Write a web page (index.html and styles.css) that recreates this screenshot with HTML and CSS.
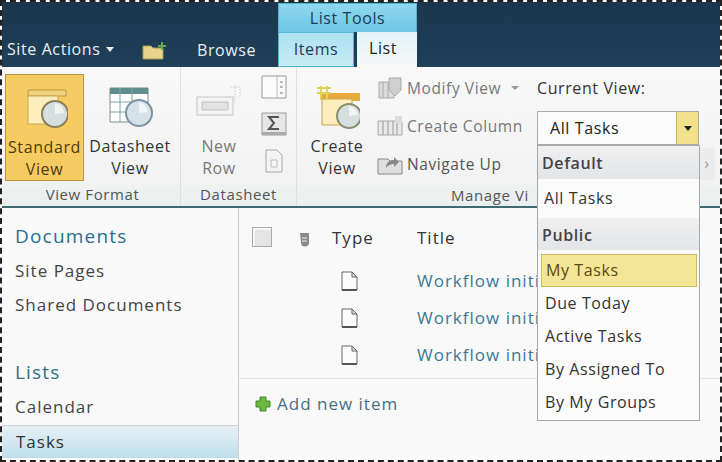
FILE: index.html
```html
<!DOCTYPE html>
<html lang="en">
<head>
<meta charset="UTF-8">
<title>Tasks</title>
<link rel="stylesheet" href="styles.css">
</head>
<body>

<div class="page">
  <div class="topbar">
    <div class="site-actions">Site Actions <span class="caret-white"></span></div>
    <svg class="nav-icon" width="24" height="20" viewBox="0 0 24 20">
      <path d="M1 5h8l2 2h10v11H1z" fill="#e8d48a" stroke="#a8985a"/>
      <path d="M16 4h3V1h2v3h3v2h-3v3h-2V6h-3z" fill="#5fb04a"/>
    </svg>
    <div class="browse">Browse</div>
    <div class="tool-tabs">
      <div class="tool-title">List Tools</div>
      <div class="tool-row">
        <div class="tab-items">Items</div>
        <div class="tab-list">List</div>
      </div>
    </div>
  </div>

  <div class="ribbon">
    <div class="group group-format">
      <div class="group-body">
        <div class="big-btn big-active">
          <svg width="46" height="44" viewBox="0 0 46 44">
            <path d="M6 4h38v6H6z" fill="#f3d27e" stroke="#b89545"/>
            <path d="M6 10h30v28H6z" fill="#fdeebc" stroke="#c9a654"/>
            <circle cx="33" cy="28" r="13" fill="#d5dfe0" stroke="#8b7f58" stroke-width="2"/>
            <path d="M33 17a11 11 0 0 1 9 10l-9 1z" fill="#f2f4f2"/>
          </svg>
          <span>Standard<br>View</span>
        </div>
        <div class="big-btn">
          <svg width="46" height="44" viewBox="0 0 46 44">
            <path d="M3 3h38v34H3z" fill="#fff" stroke="#76908f"/>
            <path d="M3 3h38v6H3z" fill="#5f8f8c"/>
            <path d="M3 17h38M3 27h38M13 3v34M25 3v34" stroke="#7fa5a2"/>
            <circle cx="32" cy="28" r="13" fill="#d6e2ea" stroke="#7e93a3" stroke-width="2"/>
            <path d="M32 17a11 11 0 0 1 9 10l-9 1z" fill="#f2f6f8"/>
          </svg>
          <span>Datasheet<br>View</span>
        </div>
      </div>
      <div class="group-label">View Format</div>
    </div>

    <div class="group group-data">
      <div class="group-body">
        <div class="big-btn btn-new muted">
          <svg width="46" height="44" viewBox="0 0 46 44">
            <path d="M1 12h36v18H1z" fill="#f4f4f4" stroke="#c4c4c4"/>
            <path d="M6 17h26v8H6z" fill="#e2e2e2" stroke="#c0c0c0"/>
            <path d="M34 2h10v10M39 2v16" fill="none" stroke="#d4d4d4" stroke-dasharray="2 1"/>
          </svg>
          <span>New<br>Row</span>
        </div>
        <div class="small-icons">
          <svg width="26" height="26" viewBox="0 0 26 26">
            <path d="M1 2h24v22H1z" fill="#fbfbfb" stroke="#9a9a9a"/>
            <path d="M16 2v22" stroke="#bbb"/>
            <path d="M19 8h3M19 13h3M19 19h3" stroke="#777"/>
          </svg>
          <svg width="26" height="26" viewBox="0 0 26 26">
            <path d="M1 2h24v22H1z" fill="#e6e6e6" stroke="#999"/>
            <path d="M1 21h24v3H1z" fill="#aaa"/>
            <path d="M18 6H8l5 6-5 6h10" fill="none" stroke="#555" stroke-width="2"/>
          </svg>
          <svg width="26" height="26" viewBox="0 0 26 26">
            <path d="M5 2h11l5 5v17H5z" fill="#f4f4f4" stroke="#aaa"/>
            <path d="M10 12h6v7h-6z" fill="none" stroke="#bbb"/>
          </svg>
        </div>
      </div>
      <div class="group-label">Datasheet</div>
    </div>

    <div class="group group-manage">
      <div class="group-body">
        <div class="big-btn btn-create">
          <svg width="46" height="44" viewBox="0 0 46 44">
            <path d="M8 8h38v8H8z" fill="#e8a93c"/>
            <path d="M8 14h30v26H8z" fill="#fdeebc" stroke="#c9a654"/>
            <path d="M3 8h14M3 3h14M7 1v14M13 1v14" stroke="#dcd45a" stroke-width="2"/>
            <circle cx="35" cy="31" r="12" fill="#d5dfe0" stroke="#8b8b70" stroke-width="2"/>
            <path d="M35 21a10 10 0 0 1 9 9l-9 1z" fill="#f2f4f2"/>
          </svg>
          <span>Create<br>View</span>
        </div>
        <div class="cmd-list">
          <div class="cmd muted">
            <svg width="26" height="24" viewBox="0 0 26 24">
              <path d="M2 6h15v16H2z" fill="#dcdcdc" stroke="#aaa"/>
              <path d="M6 6v16M11 6v16" stroke="#aaa"/>
              <path d="M12 2h12v12l-6 6-6-6z" fill="#cfcfcf" stroke="#aaa"/>
            </svg>
            <span>Modify View</span><span class="caret-gray"></span>
          </div>
          <div class="cmd muted">
            <svg width="26" height="24" viewBox="0 0 26 24">
              <path d="M1 7h24v14H1z" fill="#e8e8e8" stroke="#aaa"/>
              <path d="M6 7v14M11 7v14M16 7v14M20 7v14" stroke="#999"/>
              <path d="M18 2h7v7h-7z" fill="#ddd"/>
            </svg>
            <span>Create Column</span>
          </div>
          <div class="cmd cmd-dark">
            <svg width="26" height="24" viewBox="0 0 26 24">
              <path d="M1 7h10l2 2h12v13H1z" fill="#dedede" stroke="#888"/>
              <path d="M9 16c0-6 4-8 8-8V5l5 5-5 5v-3c-3 0-6 1-8 4z" fill="#888"/>
            </svg>
            <span>Navigate Up</span>
          </div>
        </div>
        <div class="view-picker">
          <div class="view-label">Current View:</div>
          <div class="view-select">
            <span class="view-value">All Tasks</span>
            <span class="view-arrow"><span class="caret-black"></span></span>
          </div>
        </div>
      </div>
      <div class="group-label group-label-manage">Manage Vi</div>
    </div>
  </div>

  <div class="content">
    <div class="sidenav">
      <div class="nav-head">Documents</div>
      <div class="nav-item">Site Pages</div>
      <div class="nav-item">Shared Documents</div>
      <div class="nav-head nav-head-lists">Lists</div>
      <div class="nav-item nav-calendar">Calendar</div>
      <div class="nav-item nav-selected">Tasks</div>
    </div>
    <div class="main">
      <div class="list-head">
        <span class="check"></span>
        <svg class="attach" width="14" height="16" viewBox="0 0 14 16">
          <path d="M3 2h9v9a4 4 0 0 1-8 1z" fill="#8a8a8a"/>
          <path d="M5 7h5M5 10h5" stroke="#eee"/>
        </svg>
        <span class="col-type">Type</span>
        <span>Title</span>
      </div>
      <div class="list-row">
        <svg class="doc" width="17" height="20" viewBox="0 0 17 20">
          <path d="M1 1h10l5 5v13H1z" fill="#fbfbfb" stroke="#666"/>
          <path d="M11 1v5h5z" fill="#ddd" stroke="#666"/>
          <path d="M1 19h15" stroke="#555" stroke-width="2"/>
        </svg>
        <a class="row-link">Workflow initi</a>
      </div>
      <div class="list-row">
        <svg class="doc" width="17" height="20" viewBox="0 0 17 20">
          <path d="M1 1h10l5 5v13H1z" fill="#fbfbfb" stroke="#666"/>
          <path d="M11 1v5h5z" fill="#ddd" stroke="#666"/>
          <path d="M1 19h15" stroke="#555" stroke-width="2"/>
        </svg>
        <a class="row-link">Workflow initi</a>
      </div>
      <div class="list-row">
        <svg class="doc" width="17" height="20" viewBox="0 0 17 20">
          <path d="M1 1h10l5 5v13H1z" fill="#fbfbfb" stroke="#666"/>
          <path d="M11 1v5h5z" fill="#ddd" stroke="#666"/>
          <path d="M1 19h15" stroke="#555" stroke-width="2"/>
        </svg>
        <a class="row-link">Workflow initi</a>
      </div>
      <div class="add-item">
        <svg width="16" height="16" viewBox="0 0 16 16">
          <path d="M5 1h6v4h4v6h-4v4H5v-4H1V5h4z" fill="#6fb83f" stroke="#3f8a2a"/>
        </svg>
        <span>Add new item</span>
      </div>
    </div>
  </div>

  <div class="ribbon-scroll">›</div>

  <div class="view-menu">
    <div class="menu-head">Default</div>
    <div class="menu-item menu-first">All Tasks</div>
    <div class="menu-head menu-head-public">Public</div>
    <div class="menu-item menu-hover">My Tasks</div>
    <div class="menu-item">Due Today</div>
    <div class="menu-item">Active Tasks</div>
    <div class="menu-item">By Assigned To</div>
    <div class="menu-item">By My Groups</div>
  </div>
</div>

</body>
</html>
```

FILE: styles.css
```css
* {
  box-sizing: border-box;
}
body {
  margin: 0;
  font-family: "Open Sans", "Noto Sans", sans-serif;
  font-size: 16px;
  letter-spacing: 0.6px;
  color: #333;
  background: #fff;
}
.page {
  position: relative;
  width: 722px;
  height: 462px;
  overflow: hidden;
  border: 2px dashed #222;
  background: #f9f9f9;
}

/* top bar */
.topbar {
  display: flex;
  align-items: flex-end;
  height: 65px;
  padding-left: 5px;
  background: linear-gradient(#1b364d, #1f4058);
  color: #e8eef2;
}
.site-actions {
  display: flex;
  align-items: center;
  gap: 6px;
  width: 135px;
  height: 36px;
}
.caret-white {
  border: 4px solid transparent;
  border-top: 5px solid #eee;
  border-bottom: 0;
}
.nav-icon {
  margin: 0 30px 6px 0;
}
.browse {
  width: 82px;
  height: 34px;
  line-height: 34px;
  padding-left: 1px;
}
.tool-tabs {
  width: 139px;
  color: #1d3c52;
}
.tool-title {
  height: 29px;
  line-height: 28px;
  text-align: center;
  background: linear-gradient(#8fd7ef, #6cc6e4);
  border: 1px solid #54b4d2;
  border-bottom: 0;
}
.tool-row {
  display: flex;
  justify-content: space-between;
}
.tab-items {
  width: 76px;
  height: 35px;
  line-height: 33px;
  text-align: center;
  background: linear-gradient(#aee1f2, #c6ebf5);
  border: 1px solid #54b4d2;
}
.tab-list {
  width: 60px;
  height: 35px;
  line-height: 33px;
  padding-left: 12px;
  color: #222;
  background: linear-gradient(#e4f3f8, #f7f7f7);
}

/* ribbon */
.ribbon {
  display: flex;
  height: 141px;
  background: linear-gradient(#f8f8f8, #f3f3f3 80%, #e9eeee);
  border-bottom: 2px solid #3f6a70;
}
.group {
  display: flex;
  flex-direction: column;
  border-right: 1px solid #e0e0e0;
}
.group-format {
  width: 179px;
  padding: 7px 0 0 3px;
}
.group-data {
  width: 116px;
  padding-top: 7px;
}
.group-manage {
  flex: 1;
  border-right: 0;
  padding-top: 7px;
}
.group-body {
  display: flex;
  height: 109px;
}
.group-label {
  text-align: center;
  font-size: 15px;
  color: #555;
  line-height: 24px;
}
.group-label-manage {
  padding-left: 78px;
  text-align: left;
  margin-left: 76px;
}
.big-btn {
  display: flex;
  flex-direction: column;
  align-items: center;
  width: 92px;
  padding-top: 11px;
  font-size: 16px;
  line-height: 22px;
  text-align: center;
  color: #333;
}
.big-btn svg {
  margin-bottom: 6px;
}
.big-active {
  width: 79px;
  height: 107px;
  background: #f6cb62;
  border: 1px solid #b7953f;
  color: #4d3c10;
}
.muted {
  color: #777;
}
.btn-new {
  width: 76px;
}
.btn-create {
  width: 80px;
}
.small-icons {
  display: flex;
  flex-direction: column;
  gap: 11px;
  padding: 0 0 0 4px;
}
.cmd-list {
  display: flex;
  flex-direction: column;
  width: 160px;
  margin-top: -5px;
}
.cmd {
  display: flex;
  align-items: center;
  gap: 4px;
  height: 38px;
  white-space: nowrap;
  font-size: 15.5px;
}
.cmd-dark {
  color: #555;
}
.caret-gray {
  margin-left: 6px;
  border: 4px solid transparent;
  border-top: 4px solid #999;
  border-bottom: 0;
}
.view-picker {
  width: 162px;
}
.view-label {
  height: 37px;
  line-height: 28px;
  white-space: nowrap;
  color: #333;
}
.view-select {
  display: flex;
  height: 34px;
  background: #fbfbfb;
  border: 1px solid #aaa;
}
.view-value {
  flex: 1;
  padding-left: 12px;
  line-height: 32px;
  color: #222;
}
.view-arrow {
  display: flex;
  align-items: center;
  justify-content: center;
  width: 22px;
  background: #f0e18a;
  border-left: 1px solid #c8b860;
}
.caret-black {
  border: 4px solid transparent;
  border-top: 5px solid #222;
  border-bottom: 0;
}
.ribbon-scroll {
  position: absolute;
  left: 697px;
  top: 146px;
  width: 16px;
  height: 32px;
  line-height: 30px;
  text-align: center;
  color: #999;
  background: #ececec;
}

/* nav and list */
.content {
  display: flex;
  height: 252px;
  font-size: 17px;
  letter-spacing: 1px;
}
.sidenav {
  width: 237px;
  padding-top: 15px;
  border-right: 1px solid #ccc;
}
.nav-head {
  height: 31px;
  padding-left: 13px;
  font-size: 19px;
  letter-spacing: 1.2px;
  line-height: 26px;
  color: #2c6e8c;
}
.nav-head-lists {
  margin-top: 37px;
}
.nav-item {
  height: 34px;
  padding-left: 13px;
  line-height: 34px;
  color: #444;
}
.nav-calendar {
  height: 35px;
}
.nav-selected {
  height: 33px;
  padding-left: 14px;
  line-height: 32px;
  background: linear-gradient(#e6f1f5, #bedeec);
  border-top: 1px solid #ccd6da;
  color: #333;
}
.main {
  flex: 1;
}
.list-head {
  display: flex;
  align-items: center;
  height: 54px;
  padding-left: 13px;
  padding-top: 4px;
  color: #333;
}
.check {
  width: 20px;
  height: 20px;
  background: #e4e4e4;
  border: 1px solid #aaa;
  box-shadow: inset 2px 2px 0 #f6f6f6;
}
.attach {
  margin: 3px 0 0 25px;
}
.col-type {
  width: 85px;
  margin-left: 21px;
}
.list-row {
  display: flex;
  align-items: center;
  height: 37px;
  padding-left: 102px;
}
.doc {
  margin-right: 59px;
}
.row-link {
  white-space: nowrap;
  color: #3a7895;
}
.add-item {
  display: flex;
  align-items: center;
  gap: 6px;
  height: 50px;
  margin-top: 5px;
  padding-left: 16px;
  border-top: 1px solid #e2e2e2;
  color: #4b6f7c;
}

/* dropdown over the page */
.view-menu {
  position: absolute;
  left: 535px;
  top: 143px;
  width: 163px;
  height: 276px;
  background: #fbfbfb;
  border: 1px solid #a8a8a8;
  color: #333;
}
.menu-head {
  height: 33px;
  padding-left: 4px;
  line-height: 34px;
  font-weight: 600;
  color: #444;
  background: linear-gradient(#f0f0f0, #e2e4e8);
}
.menu-head-public {
  height: 32px;
  margin-top: 3px;
}
.menu-item {
  height: 33px;
  padding-left: 7px;
  line-height: 33px;
}
.menu-first {
  height: 36px;
  line-height: 39px;
  padding-left: 6px;
}
.menu-hover {
  margin: 4px 2px 0 3px;
  padding-left: 4px;
  line-height: 31px;
  background: #f5e596;
  border: 1px solid #cdbb62;
  color: #5a4a12;
}
```
